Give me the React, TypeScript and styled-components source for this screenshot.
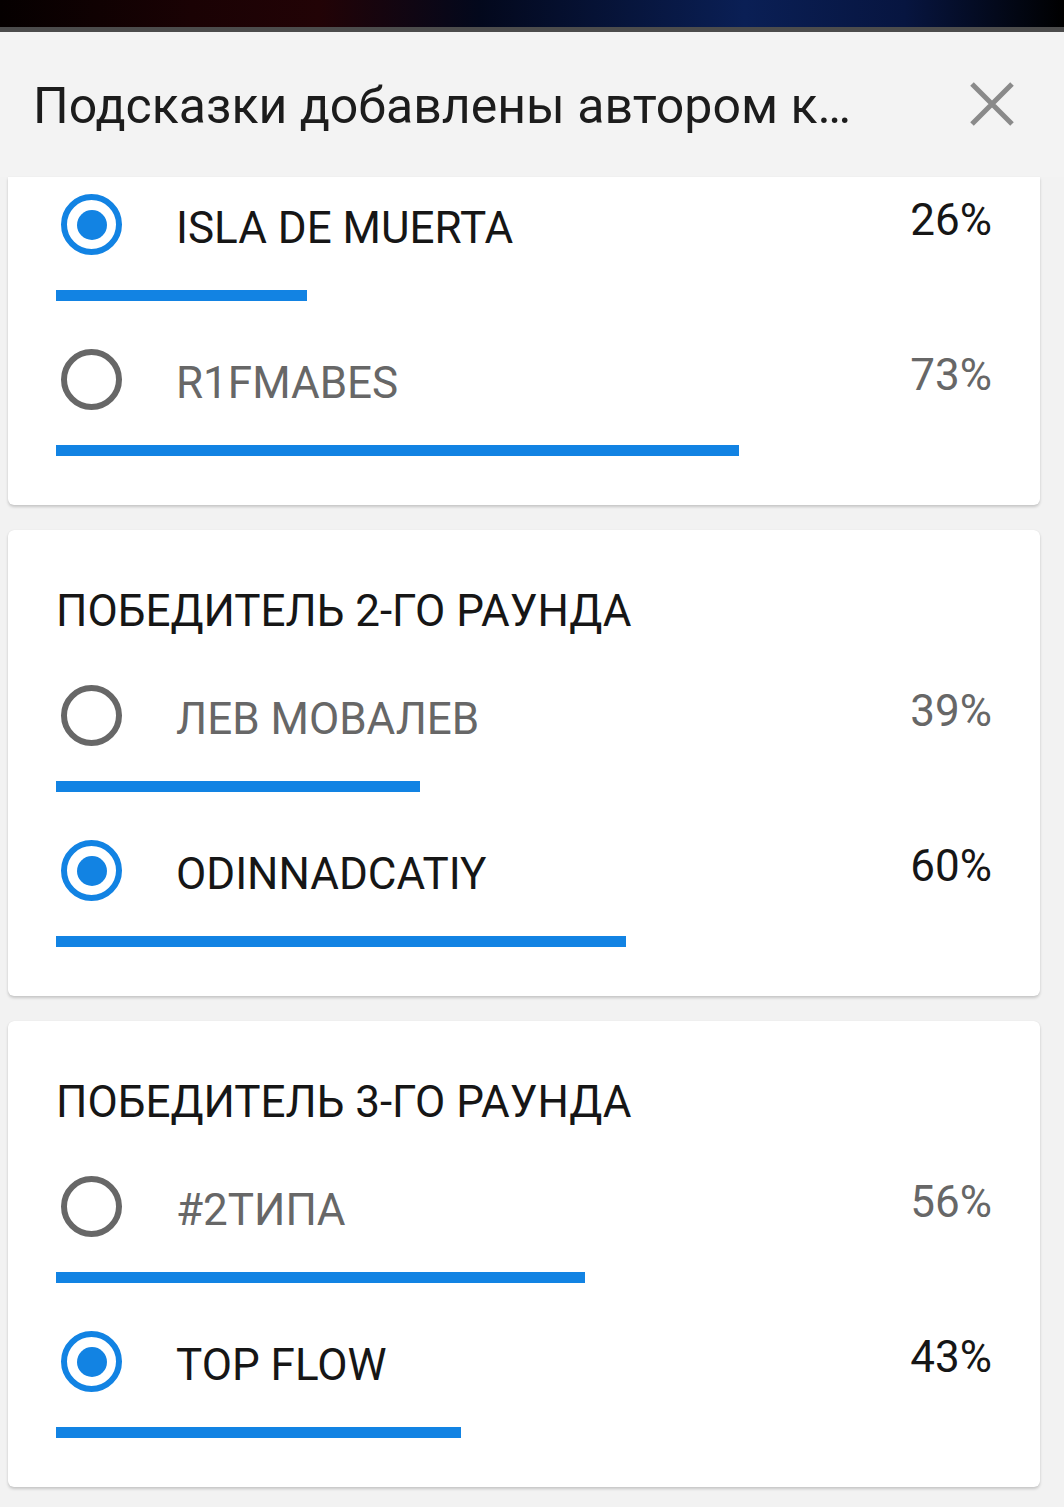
import React from "react";
import styled, { createGlobalStyle } from "styled-components";

const BLUE = "#1283e3";

const polls = [
	{
		id: 1,
		title: "",
		cut: true,
		options: [
			{ label: "ISLA DE MUERTA", pct: 26, fill: 0.268, checked: true },
			{ label: "R1FMABES", pct: 73, fill: 0.73, checked: false },
		],
	},
	{
		id: 2,
		title: "ПОБЕДИТЕЛЬ 2-ГО РАУНДА",
		cut: false,
		options: [
			{ label: "ЛЕВ МОВАЛЕВ", pct: 39, fill: 0.389, checked: false },
			{ label: "ODINNADCATIY", pct: 60, fill: 0.609, checked: true },
		],
	},
	{
		id: 3,
		title: "ПОБЕДИТЕЛЬ 3-ГО РАУНДА",
		cut: false,
		options: [
			{ label: "#2ТИПА", pct: 56, fill: 0.565, checked: false },
			{ label: "TOP FLOW", pct: 43, fill: 0.433, checked: true },
		],
	},
];

const CloseIcon = () => (
	<svg width="44" height="44" viewBox="0 0 44 44">
		<path
			d="M2 2 L42 42 M42 2 L2 42"
			stroke="#8a8a8a"
			strokeWidth="5"
			fill="none"
		/>
	</svg>
);

const App = () => {
	return (
		<>
			<GlobalStyle />
			<Screen>
				<StatusStrip />
				<Header>
					<HeaderTitle>Подсказки добавлены автором к…</HeaderTitle>
					<CloseButton>
						<CloseIcon />
					</CloseButton>
				</Header>
				<List>
					{polls.map((poll) => (
						<Card key={poll.id} $cut={poll.cut}>
							{poll.title && <CardTitle>{poll.title}</CardTitle>}
							{poll.options.map((opt, i) => (
								<Option key={opt.label} $first={i === 0}>
									<OptionRow>
										<Radio $checked={opt.checked} />
										<OptionLabel $checked={opt.checked}>
											{opt.label}
										</OptionLabel>
										<Percent $checked={opt.checked}>
											{opt.pct}%
										</Percent>
									</OptionRow>
									<Bar style={{ width: `${opt.fill * 100}%` }} />
								</Option>
							))}
						</Card>
					))}
				</List>
			</Screen>
		</>
	);
};

export default App;

const GlobalStyle = createGlobalStyle`
	html, body {
		margin: 0;
		padding: 0;
		background: #f2f2f2;
	}
	body {
		font-family: Roboto, "Noto Sans", "Liberation Sans", sans-serif;
	}
`;

const Screen = styled.div`
	width: 1064px;
	min-height: 1507px;
	background: #f2f2f2;
	display: flex;
	flex-direction: column;
`;

const StatusStrip = styled.div`
	height: 27px;
	background: linear-gradient(
		90deg,
		#050000 0%,
		#1a0204 18%,
		#220306 30%,
		#03081c 45%,
		#0a1f55 70%,
		#071540 85%,
		#000 100%
	);
	border-bottom: 5px solid #4c4c4c;
`;

const Header = styled.div`
	height: 145px;
	display: flex;
	align-items: center;
	padding: 0 50px 0 33px;
	background: #f3f3f3;
`;

const HeaderTitle = styled.div`
	flex: 1;
	font-size: 50px;
	line-height: 58px;
	color: #1c1c1c;
	white-space: nowrap;
	margin-top: 2px;
`;

const CloseButton = styled.div`
	width: 44px;
	height: 44px;
	display: flex;
	margin-top: -2px;
`;

const List = styled.div`
	display: flex;
	flex-direction: column;
	gap: 25px;
	padding: 0 24px 0 8px;
`;

const Card = styled.div<{ $cut: boolean }>`
	background: #fff;
	border-radius: ${(p) => (p.$cut ? "0 0 6px 6px" : "6px")};
	box-shadow: 0 2px 3px rgba(0, 0, 0, 0.18), 0 0 1px rgba(0, 0, 0, 0.1);
	padding: ${(p) => (p.$cut ? "17px" : "55px")} 48px 49px 48px;
`;

const CardTitle = styled.div`
	font-size: 44px;
	line-height: 52px;
	color: #161616;
	margin-bottom: 48px;
`;

const Option = styled.div<{ $first: boolean }>`
	margin-top: ${(p) => (p.$first ? "0" : "48px")};
`;

const OptionRow = styled.div`
	display: flex;
	align-items: flex-start;
	height: 60px;
`;

const Radio = styled.span<{ $checked: boolean }>`
	box-sizing: border-box;
	width: 61px;
	height: 61px;
	margin-left: 5px;
	border-radius: 50%;
	border: 6px solid ${(p) => (p.$checked ? BLUE : "#676767")};
	display: flex;
	align-items: center;
	justify-content: center;
	flex-shrink: 0;
	&::after {
		content: "";
		width: 30px;
		height: 30px;
		border-radius: 50%;
		background: ${(p) => (p.$checked ? BLUE : "transparent")};
	}
`;

const OptionLabel = styled.div<{ $checked: boolean }>`
	flex: 1;
	margin-left: 54px;
	margin-top: 8px;
	font-size: 44px;
	line-height: 52px;
	color: ${(p) => (p.$checked ? "#161616" : "#676767")};
`;

const Percent = styled.div<{ $checked: boolean }>`
	font-size: 44px;
	line-height: 52px;
	color: ${(p) => (p.$checked ? "#161616" : "#676767")};
`;

const Bar = styled.div`
	height: 11px;
	margin-top: 36px;
	background: ${BLUE};
`;
